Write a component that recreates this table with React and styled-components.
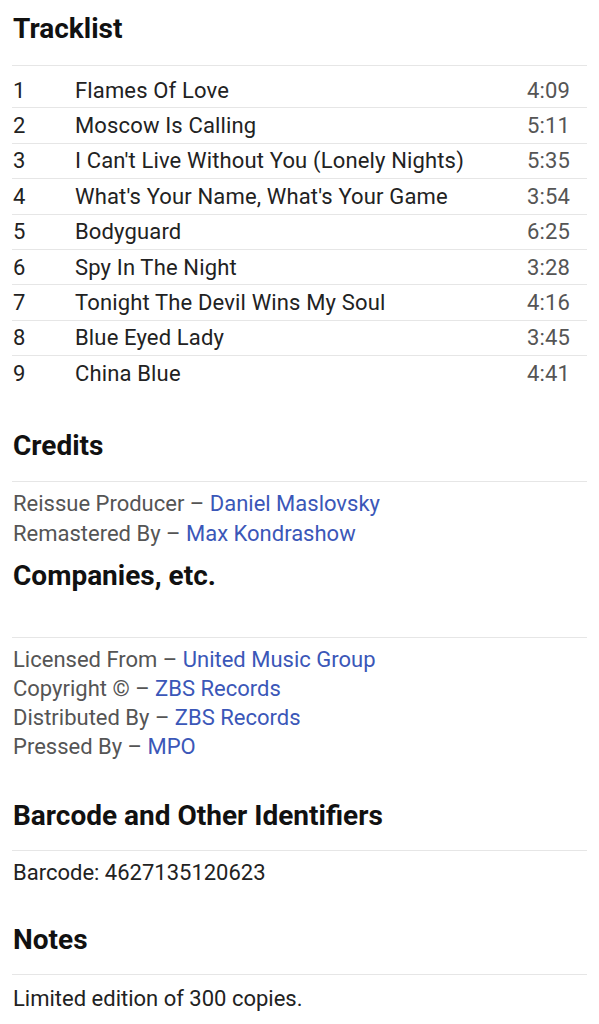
import React from "react";
import styled, { createGlobalStyle } from "styled-components";

const GlobalStyle = createGlobalStyle`
  html, body {
    margin: 0;
    padding: 0;
    background: #ffffff;
  }
  body {
    font-family: Roboto, "Liberation Sans", Arial, sans-serif;
    -webkit-font-smoothing: antialiased;
  }
`;

const Page = styled.div`
  padding: 13px 12px 0 12px;
  width: 575px;
`;

const Section = styled.section`
  margin-top: ${({ top }) => top || 0}px;
`;

const Heading = styled.h2`
  margin: 0 0 ${({ after }) => after || 19}px 1px;
  font-size: 28px;
  line-height: 32px;
  font-weight: 700;
  color: #111111;
`;

const Body = styled.div`
  border-top: 1px solid #e6e6e6;
  padding-top: ${({ pad }) => pad || 7}px;
`;

const TrackRow = styled.div`
  display: grid;
  grid-template-columns: 62px 1fr auto;
  align-items: center;
  height: 35.4px;
  box-sizing: border-box;
  padding: 0 17px 0 1px;
  font-size: 22px;
  letter-spacing: 0.15px;
  color: #222222;
  border-bottom: ${({ last }) => (last ? "none" : "1px solid #e6e6e6")};
`;

const Duration = styled.span`
  color: #555555;
`;

const Line = styled.div`
  padding-left: 1px;
  font-size: 22px;
  line-height: ${({ lh }) => lh || 30}px;
  color: ${({ dark }) => (dark ? "#222222" : "#555555")};
`;

const Link = styled.a`
  color: #3b57b8;
  text-decoration: none;
`;

const tracks = [
  ["1", "Flames Of Love", "4:09"],
  ["2", "Moscow Is Calling", "5:11"],
  ["3", "I Can't Live Without You (Lonely Nights)", "5:35"],
  ["4", "What's Your Name, What's Your Game", "3:54"],
  ["5", "Bodyguard", "6:25"],
  ["6", "Spy In The Night", "3:28"],
  ["7", "Tonight The Devil Wins My Soul", "4:16"],
  ["8", "Blue Eyed Lady", "3:45"],
  ["9", "China Blue", "4:41"],
];

const credits = [
  ["Reissue Producer", "Daniel Maslovsky"],
  ["Remastered By", "Max Kondrashow"],
];

const companies = [
  ["Licensed From", "United Music Group"],
  ["Copyright ©", "ZBS Records"],
  ["Distributed By", "ZBS Records"],
  ["Pressed By", "MPO"],
];

const App = () => (
  <>
    <GlobalStyle />
    <Page>
      <Section>
        <Heading after={20}>Tracklist</Heading>
        <Body>
          {tracks.map(([n, title, time], i) => (
            <TrackRow key={n} last={i === tracks.length - 1}>
              <span>{n}</span>
              <span>{title}</span>
              <Duration>{time}</Duration>
            </TrackRow>
          ))}
        </Body>
      </Section>

      <Section top={38}>
        <Heading>Credits</Heading>
        <Body>
          {credits.map(([role, name]) => (
            <Line key={role}>
              {role} – <Link href="#">{name}</Link>
            </Line>
          ))}
        </Body>
      </Section>

      <Section top={11}>
        <Heading after={45}>Companies, etc.</Heading>
        <Body>
          {companies.map(([role, name]) => (
            <Line key={role} lh={29.3}>
              {role} – <Link href="#">{name}</Link>
            </Line>
          ))}
        </Body>
      </Section>

      <Section top={38}>
        <Heading after={18}>Barcode and Other Identifiers</Heading>
        <Body>
          <Line dark>Barcode: 4627135120623</Line>
        </Body>
      </Section>

      <Section top={36}>
        <Heading after={18}>Notes</Heading>
        <Body pad={9}>
          <Line dark>Limited edition of 300 copies.</Line>
        </Body>
      </Section>
    </Page>
  </>
);

export default App;
